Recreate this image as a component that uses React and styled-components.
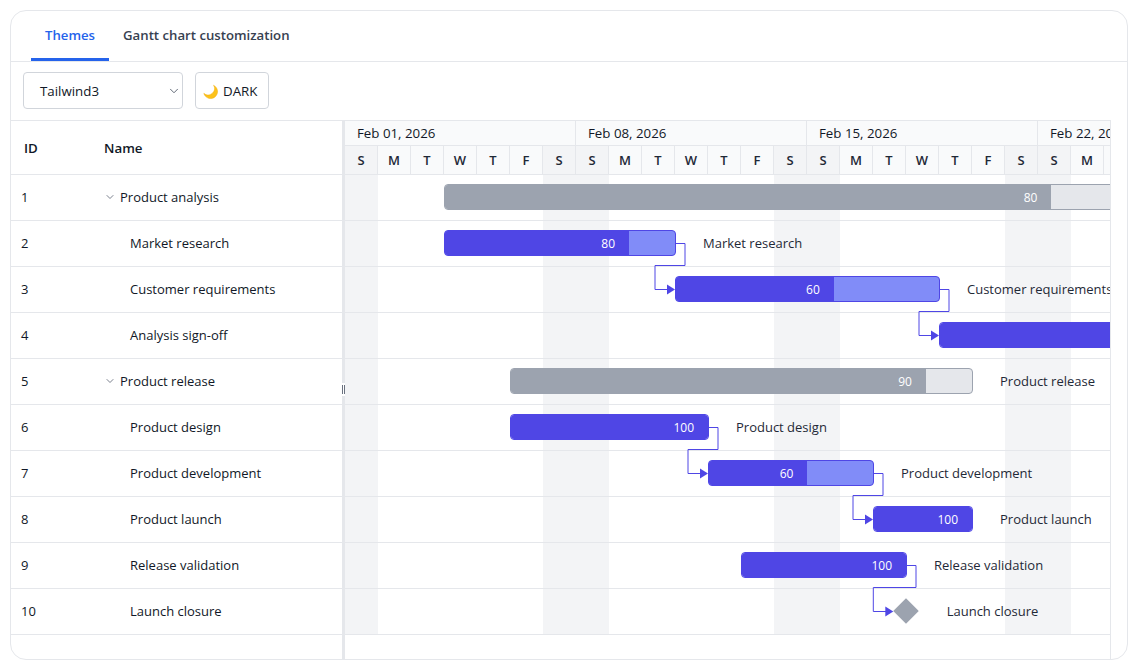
import React from "react";
import styled, { createGlobalStyle } from "styled-components";
import { ChevronDown } from "lucide-react";

const DAY = 33;
const ROW = 46;
const NUM_DAYS = 28;
const FONT = '"Open Sans", "Noto Sans", sans-serif';

const GlobalStyle = createGlobalStyle`
  html, body { margin: 0; padding: 0; background: #ffffff; }
  body { font-family: ${FONT}; color: #111827; }
  * { box-sizing: border-box; }
`;

const Card = styled.div`
  margin: 10px;
  width: 1118px;
  height: 650px;
  border: 1px solid #e5e7eb;
  border-radius: 16px;
  overflow: hidden;
  display: flex;
  flex-direction: column;
  background: #fff;
`;

const TabBar = styled.div`
  display: flex;
  height: 51px;
  flex: none;
  border-bottom: 1px solid #e5e7eb;
  padding-left: 20px;
`;

const Tab = styled.div`
  display: flex;
  align-items: center;
  padding: 0 14px;
  font-size: 13.2px;
  font-weight: 600;
  color: ${(p) => (p.$active ? "#2563eb" : "#374151")};
  border-bottom: 3px solid ${(p) => (p.$active ? "#2563eb" : "transparent")};
`;

const Toolbar = styled.div`
  display: flex;
  align-items: flex-start;
  gap: 12px;
  height: 58px;
  flex: none;
  padding: 10px 12px 0;
`;

const Select = styled.div`
  width: 160px;
  height: 37px;
  border: 1px solid #d1d5db;
  border-radius: 4px;
  display: flex;
  align-items: center;
  justify-content: space-between;
  padding: 0 1px 0 16px;
  font-size: 13.3px;
  color: #111827;
`;

const ThemeButton = styled.div`
  height: 37px;
  width: 74px;
  padding: 0 0 0 7px;
  display: flex;
  align-items: center;
  gap: 4px;
  border: 1px solid #d1d5db;
  border-radius: 4px;
  font-size: 13.3px;
  color: #111827;
`;

const GanttWrap = styled.div`
  flex: 1;
  min-height: 0;
  display: flex;
  border-top: 1px solid #e5e7eb;
  border-right: 1px solid #e5e7eb;
  margin-right: 16px;
`;

const LeftGrid = styled.div`
  width: 331px;
  flex: none;
  display: flex;
  flex-direction: column;
`;

const GridHeader = styled.div`
  height: 54px;
  flex: none;
  border-bottom: 1px solid #e5e7eb;
  display: flex;
  align-items: center;
  padding-top: 1px;
  font-size: 13.3px;
  font-weight: 600;
  color: #111827;
`;

const GridRow = styled.div`
  height: ${ROW}px;
  flex: none;
  border-bottom: 1px solid #e5e7eb;
  display: flex;
  align-items: center;
  padding-bottom: 1px;
  font-size: 13px;
  color: #111827;
`;

const IdCell = styled.div`
  width: 81px;
  flex: none;
  padding-left: ${(p) => (p.$header ? 13 : 10)}px;
`;

const NameCell = styled.div`
  display: flex;
  align-items: center;
  gap: 4px;
  padding-left: ${(p) => (p.$child ? 38 : 12)}px;
  color: inherit;
  svg { color: #6b7280; }
`;

const Splitter = styled.div`
  width: 3px;
  flex: none;
  background: #e5e7eb;
  position: relative;
`;

const Grip = styled.div`
  position: absolute;
  left: -1px;
  top: 50%;
  margin-top: -7px;
  width: 5px;
  height: 13px;
  background: #fff;
  display: flex;
  justify-content: center;
  align-items: center;
  gap: 1px;
  &::before, &::after {
    content: "";
    width: 1px;
    height: 9px;
    background: #6b7280;
  }
`;

const Chart = styled.div`
  flex: 1;
  min-width: 0;
  overflow: hidden;
  display: flex;
  flex-direction: column;
`;

const TimelineHeader = styled.div`
  width: ${NUM_DAYS * DAY}px;
  height: 54px;
  flex: none;
  border-bottom: 1px solid #e5e7eb;
  display: flex;
  flex-direction: column;
`;

const WeekTier = styled.div`
  height: 25px;
  flex: none;
  display: flex;
  border-bottom: 1px solid #e5e7eb;
`;

const WeekCell = styled.div`
  width: ${DAY * 7}px;
  flex: none;
  border-right: 1px solid #e5e7eb;
  background: #f9fafb;
  padding-left: 12px;
  display: flex;
  align-items: center;
  font-size: 13.3px;
  font-weight: 500;
  color: #111827;
`;

const DayTier = styled.div`
  flex: 1;
  display: flex;
`;

const DayCell = styled.div`
  width: ${DAY}px;
  flex: none;
  border-right: 1px solid #e5e7eb;
  background: ${(p) => (p.$weekend ? "#f3f4f6" : "#f9fafb")};
  display: flex;
  align-items: center;
  justify-content: center;
  font-size: 13px;
  font-weight: 600;
  color: #1f2937;
`;

const RowsArea = styled.div`
  position: relative;
  width: ${NUM_DAYS * DAY}px;
  flex: none;
`;

const DayColumns = styled.div`
  position: absolute;
  inset: 0;
  display: flex;
`;

const DayColumn = styled.div`
  width: ${DAY}px;
  flex: none;
  background: ${(p) => (p.$weekend ? "#f3f4f6" : "transparent")};
`;

const ChartRow = styled.div`
  position: relative;
  height: ${ROW}px;
  border-bottom: 1px solid #e5e7eb;
`;

const Bar = styled.div`
  position: absolute;
  top: 9px;
  height: 26px;
  border-radius: 4px;
  overflow: hidden;
  display: flex;
  border: 1px solid ${(p) => (p.$parent ? "#9ca3af" : "#4f46e5")};
  background: ${(p) => (p.$parent ? "#e5e7eb" : "#818cf8")};
`;

const Progress = styled.div`
  height: 100%;
  flex: none;
  background: ${(p) => (p.$parent ? "#9ca3af" : "#4f46e5")};
  display: flex;
  align-items: center;
  justify-content: flex-end;
  padding-right: 14px;
  color: #ffffff;
  font-size: 12px;
`;

const BarLabel = styled.div`
  position: absolute;
  top: 0;
  height: ${ROW - 2}px;
  display: flex;
  align-items: center;
  font-size: 13px;
  color: #1f2937;
  white-space: nowrap;
`;

const Milestone = styled.div`
  position: absolute;
  top: 13px;
  width: 18px;
  height: 18px;
  background: #9ca3af;
  transform: rotate(45deg);
`;

const Connectors = styled.svg`
  position: absolute;
  left: 0;
  top: 0;
  pointer-events: none;
  overflow: visible;
`;

const tasks = [
  { id: 1, name: "Product analysis", parent: true, start: 3, dur: 23, progress: 80 },
  { id: 2, name: "Market research", start: 3, dur: 7, progress: 80 },
  { id: 3, name: "Customer requirements", start: 10, dur: 8, progress: 60 },
  { id: 4, name: "Analysis sign-off", start: 18, dur: 8, progress: 100 },
  { id: 5, name: "Product release", parent: true, start: 5, dur: 14, progress: 90 },
  { id: 6, name: "Product design", start: 5, dur: 6, progress: 100 },
  { id: 7, name: "Product development", start: 11, dur: 5, progress: 60 },
  { id: 8, name: "Product launch", start: 16, dur: 3, progress: 100 },
  { id: 9, name: "Release validation", start: 12, dur: 5, progress: 100 },
  { id: 10, name: "Launch closure", milestone: true, start: 17, dur: 0 },
];

const links = [
  [2, 3],
  [3, 4],
  [6, 7],
  [7, 8],
  [9, 10],
];

const weeks = ["Feb 01, 2026", "Feb 08, 2026", "Feb 15, 2026", "Feb 22, 2026"];
const LETTERS = ["S", "M", "T", "W", "T", "F", "S"];
const days = Array.from({ length: NUM_DAYS }, (_, i) => ({
  letter: LETTERS[i % 7],
  weekend: i % 7 === 0 || i % 7 === 6,
}));

const MILE_HALF = 12.7;

function taskStartX(t) {
  return t.milestone ? t.start * DAY - MILE_HALF : t.start * DAY;
}
function taskEndX(t) {
  return t.milestone ? t.start * DAY + MILE_HALF : (t.start + t.dur) * DAY;
}

function Moon() {
  return (
    <svg width="16" height="16" viewBox="0 0 16 16">
      <path
        d="M10.5 2.2 A7 7 0 1 1 0.8 10.3 A6.4 6.4 0 0 0 10.5 2.2 Z"
        fill="#fcc21b"
        stroke="#f0a800"
        strokeWidth="0.4"
      />
    </svg>
  );
}

function LinkPath({ from, to }) {
  const a = tasks.find((t) => t.id === from);
  const b = tasks.find((t) => t.id === to);
  const ra = a.id - 1;
  const rb = b.id - 1;
  const xe = taskEndX(a);
  const xs = taskStartX(b);
  const ya = ra * ROW + 22.5;
  const yb = rb * ROW + 22.5;
  const yBound = (ra + 1) * ROW - 1.5;
  const d = `M${xe} ${ya} H${xe + 10} V${yBound} H${xs - 20} V${yb} H${xs - 7}`;
  return (
    <g>
      <path d={d} fill="none" stroke="#4f46e5" strokeWidth="1" />
      <polygon points={`${xs - 8},${yb - 5} ${xs},${yb} ${xs - 8},${yb + 5}`} fill="#4f46e5" />
    </g>
  );
}

export default function App() {
  return (
    <>
      <GlobalStyle />
      <Card>
        <TabBar>
          <Tab $active>Themes</Tab>
          <Tab>Gantt chart customization</Tab>
        </TabBar>
        <Toolbar>
          <Select>
            <span>Tailwind3</span>
            <ChevronDown size={14} color="#4b5563" strokeWidth={1.5} />
          </Select>
          <ThemeButton>
            <Moon />
            <span>DARK</span>
          </ThemeButton>
        </Toolbar>
        <GanttWrap>
          <LeftGrid>
            <GridHeader>
              <IdCell $header>ID</IdCell>
              <NameCell>Name</NameCell>
            </GridHeader>
            {tasks.map((t) => (
              <GridRow key={t.id}>
                <IdCell>{t.id}</IdCell>
                <NameCell $child={!t.parent}>
                  {t.parent && <ChevronDown size={12} strokeWidth={1.8} />}
                  {t.name}
                </NameCell>
              </GridRow>
            ))}
          </LeftGrid>
          <Splitter>
            <Grip />
          </Splitter>
          <Chart>
            <TimelineHeader>
              <WeekTier>
                {weeks.map((w) => (
                  <WeekCell key={w}>{w}</WeekCell>
                ))}
              </WeekTier>
              <DayTier>
                {days.map((d, i) => (
                  <DayCell key={i} $weekend={d.weekend}>
                    {d.letter}
                  </DayCell>
                ))}
              </DayTier>
            </TimelineHeader>
            <RowsArea>
              <DayColumns>
                {days.map((d, i) => (
                  <DayColumn key={i} $weekend={d.weekend} />
                ))}
              </DayColumns>
              {tasks.map((t) => (
                <ChartRow key={t.id}>
                  {t.milestone ? (
                    <Milestone style={{ left: t.start * DAY - 9 }} />
                  ) : (
                    <Bar
                      $parent={t.parent}
                      style={{ left: t.start * DAY, width: t.dur * DAY + 1 }}
                    >
                      <Progress $parent={t.parent} style={{ width: `${t.progress}%` }}>
                        {t.progress}
                      </Progress>
                    </Bar>
                  )}
                  {!t.parent || t.id === 5 ? (
                    <BarLabel style={{ left: taskEndX(t) + 28 }}>{t.name}</BarLabel>
                  ) : null}
                </ChartRow>
              ))}
              <Connectors width={NUM_DAYS * DAY} height={tasks.length * ROW}>
                {links.map(([a, b]) => (
                  <LinkPath key={`${a}-${b}`} from={a} to={b} />
                ))}
              </Connectors>
            </RowsArea>
          </Chart>
        </GanttWrap>
      </Card>
    </>
  );
}
